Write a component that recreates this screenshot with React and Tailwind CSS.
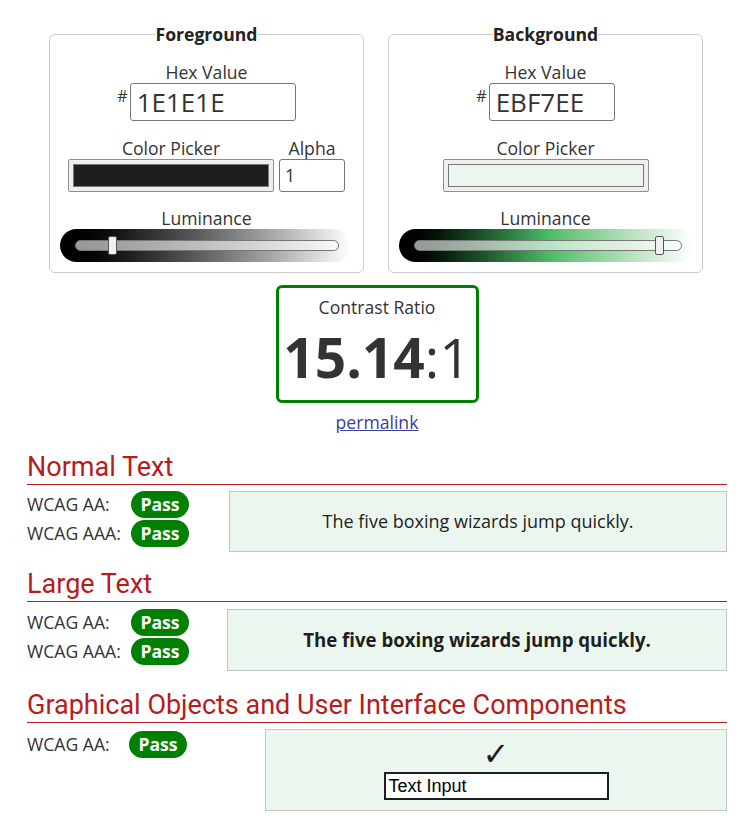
const RED = 'text-[#b71c1c]';

function Label({ children }) {
  return <div className="text-center text-[17.6px] leading-[22px]">{children}</div>;
}

function Panel({ title, children }) {
  return (
    <fieldset className="w-[315px] rounded-[6px] border border-[#ccc] pt-[15px] pb-[10px]">
      <legend align="center" className="mx-auto px-0 text-[17.6px] font-bold leading-[23px] text-[#222]">
        {title}
      </legend>
      {children}
    </fieldset>
  );
}

function HexInput({ value, width }) {
  return (
    <div className="flex items-start justify-center">
      <span className="mt-[3px] mr-[2px] text-[16px] leading-[20px]">#</span>
      <div
        className="h-[38px] rounded-[3px] border border-[#767676] pl-[6px] text-[26px] leading-[36px]"
        style={{ width }}
      >
        {value}
      </div>
    </div>
  );
}

function Swatch({ color }) {
  return (
    <div className="h-[33px] w-[206px] rounded-[2px] border border-[#8f8f8f] bg-[#efefef] p-[4px]">
      <div className="h-full border border-[#777]" style={{ background: color }} />
    </div>
  );
}

function Slider({ gradient, width, thumb }) {
  return (
    <div
      className={`ml-[10px] flex h-[33px] items-center rounded-full pl-[15px] pr-[11px] ${gradient}`}
      style={{ width }}
    >
      <div className="relative h-[11px] flex-1 rounded-full border border-[#777] bg-white/60">
        <div
          className="absolute top-[-5px] h-[19px] w-[9px] rounded-[2px] border-[1.5px] border-[#555] bg-[#f0f0f0]"
          style={{ left: thumb }}
        />
      </div>
    </div>
  );
}

function Pass() {
  return (
    <span className="flex h-[27px] w-[58px] items-center justify-center rounded-full bg-[#008000] text-[17.6px] font-bold text-white">
      Pass
    </span>
  );
}

function Row({ label, labelWidth = 104 }) {
  return (
    <div className="flex h-[27px] items-center">
      <span className="text-[17.6px]" style={{ width: labelWidth }}>{label}</span>
      <Pass />
    </div>
  );
}

function Heading({ children }) {
  return (
    <h2 className={`border-b border-[#b71c1c] pb-[2px] font-['Roboto',sans-serif] text-[27px] leading-[30px] ${RED}`}>
      {children}
    </h2>
  );
}

export default function App() {
  return (
    <div className="min-h-screen bg-white font-['Open_Sans',sans-serif] text-[#333]">
      <div className="ml-[27px] w-[700px] pt-[23px]">
        <div className="flex gap-[24px] pl-[22px]">
          <Panel title="Foreground">
            <Label>Hex Value</Label>
            <HexInput value="1E1E1E" width={166} />
            <div className="mt-[16px] flex justify-center gap-[5px]">
              <div>
                <Label>Color Picker</Label>
                <Swatch color="#1E1E1E" />
              </div>
              <div>
                <Label>Alpha</Label>
                <div className="h-[33px] w-[66px] rounded-[3px] border border-[#767676] pl-[5px] text-[17.6px] leading-[31px]">
                  1
                </div>
              </div>
            </div>
            <div className="mt-[15px]">
              <Label>Luminance</Label>
            </div>
            <Slider gradient="bg-linear-to-r from-black to-white" width={290} thumb={32} />
          </Panel>

          <Panel title="Background">
            <Label>Hex Value</Label>
            <HexInput value="EBF7EE" width={126} />
            <div className="mt-[16px] flex justify-center">
              <div>
                <Label>Color Picker</Label>
                <Swatch color="#EBF7EE" />
              </div>
            </div>
            <div className="mt-[15px]">
              <Label>Luminance</Label>
            </div>
            <Slider
              gradient="bg-linear-to-r from-black via-[#48b864] to-white"
              width={294}
              thumb={240}
            />
          </Panel>
        </div>

        <div className="mx-auto mt-[12px] h-[118px] w-[203px] rounded-[6px] border-[3px] border-[#008000] text-center">
          <div className="pt-[7px] text-[17.6px] leading-[24px]">Contrast Ratio</div>
          <div className="mt-[8px] text-[55px] leading-[60px]">
            <span className="font-bold">15.14</span>:1
          </div>
        </div>
        <div className="mt-[7px] text-center text-[17.6px] leading-[24px]">
          <a href="#" className="text-[#3a3d99] underline">permalink</a>
        </div>

        <section className="mt-[18px]">
          <Heading>Normal Text</Heading>
          <div className="mt-[6px] flex">
            <div className="flex w-[202px] flex-col gap-[2px]">
              <Row label="WCAG AA:" />
              <Row label="WCAG AAA:" />
            </div>
            <div className="flex h-[61px] w-[498px] items-center justify-center border border-[#c4c4c4] bg-[#EBF7EE] text-[18px] text-[#1E1E1E]">
              The five boxing wizards jump quickly.
            </div>
          </div>
        </section>

        <section className="mt-[17px]">
          <Heading>Large Text</Heading>
          <div className="mt-[7px] flex">
            <div className="flex w-[200px] flex-col gap-[2px]">
              <Row label="WCAG AA:" />
              <Row label="WCAG AAA:" />
            </div>
            <div className="flex h-[62px] w-[500px] items-center justify-center border border-[#c4c4c4] bg-[#EBF7EE] text-[18.66px] font-bold text-[#1E1E1E]">
              The five boxing wizards jump quickly.
            </div>
          </div>
        </section>

        <section className="mt-[19px]">
          <Heading>Graphical Objects and User Interface Components</Heading>
          <div className="mt-[6px] flex">
            <div className="w-[238px] pt-[2px]">
              <Row label="WCAG AA:" labelWidth={102} />
            </div>
            <div className="flex h-[82px] w-[462px] flex-col items-center border border-[#c4c4c4] bg-[#EBF7EE] pt-[6px]">
              <span className="font-['DejaVu_Sans',sans-serif] text-[32px] font-bold leading-[36px] text-[#1E1E1E]">✓</span>
              <div className="h-[28px] w-[225px] border-2 border-[#1E1E1E] bg-white pl-[3px] font-['Liberation_Sans',sans-serif] text-[18px] leading-[24px] text-black">
                Text Input
              </div>
            </div>
          </div>
        </section>
      </div>
    </div>
  );
}
